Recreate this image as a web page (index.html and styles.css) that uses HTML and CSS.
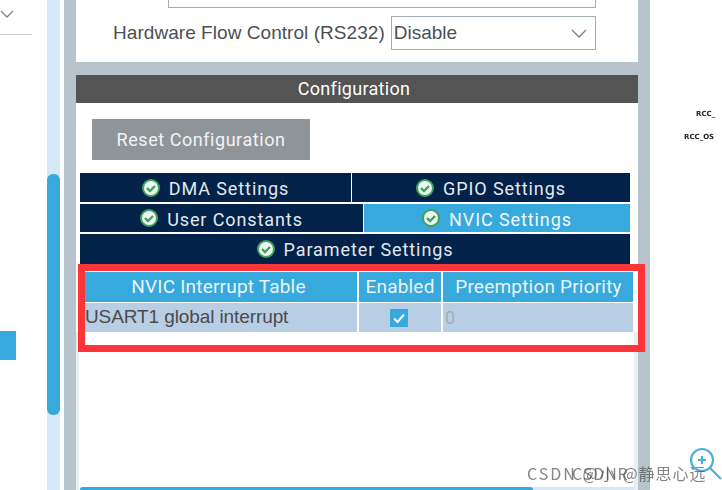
FILE: index.html
```html
<!DOCTYPE html>
<html lang="en">
  <head>
    <meta charset="UTF-8" />
    <title>USART1 NVIC Settings</title>
    <link rel="stylesheet" href="styles.css">
  </head>
  <body>
    <div class="app">
      <aside class="sidebar">
        <div class="side-select">
          <svg class="chevron" width="14" height="8" viewBox="0 0 14 8"><path d="M1 1l6 6 6-6" /></svg>
        </div>
        <div class="side-item"></div>
      </aside>
      <div class="scroll"><div class="scroll-thumb"></div></div>

      <main class="middle">
        <section class="panel-top">
          <div class="select-stub"></div>
          <div class="field">
            <label>Hardware Flow Control (RS232)</label>
            <div class="select">
              <span>Disable</span>
              <svg class="chevron" width="16" height="9" viewBox="0 0 16 9"><path d="M1 1l7 7 7-7" /></svg>
            </div>
          </div>
        </section>

        <section class="panel-config">
          <h2 class="config-title">Configuration</h2>
          <button class="reset">Reset Configuration</button>

          <div class="tabs">
            <div class="tab-row first">
              <div class="tab">
                <svg class="ok" viewBox="0 0 18 18"><circle cx="9" cy="9" r="8" /><path d="M5 9l3 3 5-5" /></svg>
                <span>DMA Settings</span>
              </div>
              <div class="tab">
                <svg class="ok" viewBox="0 0 18 18"><circle cx="9" cy="9" r="8" /><path d="M5 9l3 3 5-5" /></svg>
                <span>GPIO Settings</span>
              </div>
            </div>
            <div class="tab-row second">
              <div class="tab">
                <svg class="ok" viewBox="0 0 18 18"><circle cx="9" cy="9" r="8" /><path d="M5 9l3 3 5-5" /></svg>
                <span>User Constants</span>
              </div>
              <div class="tab active">
                <svg class="ok" viewBox="0 0 18 18"><circle cx="9" cy="9" r="8" /><path d="M5 9l3 3 5-5" /></svg>
                <span>NVIC Settings</span>
              </div>
            </div>
            <div class="tab-row third">
              <div class="tab">
                <svg class="ok" viewBox="0 0 18 18"><circle cx="9" cy="9" r="8" /><path d="M5 9l3 3 5-5" /></svg>
                <span>Parameter Settings</span>
              </div>
            </div>
          </div>

          <div class="nvic">
            <div class="nvic-head">
              <div class="col-name">NVIC Interrupt Table</div>
              <div class="col-enabled">Enabled</div>
              <div class="col-prio">Preemption Priority</div>
            </div>
            <div class="nvic-row">
              <div class="col-name cell-name">USART1 global interrupt</div>
              <div class="col-enabled cell-check">
                <svg width="18" height="18" viewBox="0 0 18 18"><rect width="18" height="18" fill="#38a9dc" /><path d="M4 9.5l3.5 3.5 6.5-7.5" /></svg>
              </div>
              <div class="col-prio cell-prio">0</div>
            </div>
          </div>

          <div class="filler">
            <div class="progress"><div class="progress-thumb"></div></div>
          </div>
          <div class="red-box"></div>
        </section>
      </main>

      <div class="canvas">
        <span class="pin pin-1">RCC_</span>
        <span class="pin pin-2">RCC_OS</span>
        <svg class="zoom-icon" width="36" height="36" viewBox="0 0 36 36">
          <circle cx="15" cy="14" r="11" />
          <path d="M23 22l11 11M15 10v8M11 14h8" />
        </svg>
      </div>
    </div>
    <div class="watermark">
      <span class="wm-a">CSDN @小R</span>
      <span class="wm-b">CSDN @静思心远</span>
    </div>
  </body>
</html>
```

FILE: styles.css
```css
* {
  box-sizing: border-box;
  margin: 0;
  padding: 0;
}
html,
body {
  width: 722px;
  height: 490px;
  overflow: hidden;
  background-color: #fff;
}
body {
  position: relative;
  font-family: "Liberation Sans", Arial, sans-serif;
}
.app {
  display: flex;
  height: 490px;
  filter: blur(0.4px);
}

/* left list */
.sidebar {
  width: 47px;
  flex: none;
}
.side-select {
  width: 32px;
  height: 35px;
  border-bottom: 1px solid #c9cfd3;
  padding-top: 10px;
}
.side-select .chevron {
  display: block;
}
.side-item {
  width: 16px;
  height: 29px;
  margin-top: 296px;
  background-color: #38a9dc;
}
.chevron path {
  fill: none;
  stroke: #77838a;
  stroke-width: 1.3;
}
.scroll {
  width: 13px;
  flex: none;
  background-color: #d6e8f6;
  padding-top: 174px;
}
.scroll-thumb {
  height: 241px;
  background-color: #38a9dc;
  border-radius: 6px;
}

/* middle column */
.middle {
  width: 586px;
  flex: none;
  margin-left: 4px;
  background-color: #b8c4cb;
  padding: 0 12px;
}
.panel-top {
  height: 62px;
  background-color: #fff;
  padding: 0 42px 0 37px;
}
.select-stub {
  height: 8px;
  margin-left: 55px;
  border: 1px solid #a3aeb4;
  border-top: none;
}
.field {
  display: flex;
  align-items: center;
  gap: 6px;
  margin-top: 8px;
}
.field label {
  font-size: 19px;
  letter-spacing: 0.05px;
  color: #4c4f55;
  white-space: nowrap;
}
.select {
  flex: 1;
  height: 34px;
  border: 1px solid #a3aeb4;
  display: flex;
  align-items: center;
  justify-content: space-between;
  padding: 0 8px 0 2px;
  font-size: 19px;
  color: #4c4f55;
}
.panel-config {
  position: relative;
  display: flex;
  flex-direction: column;
  height: 415px;
  margin-top: 13px;
  background-color: #fff;
}
.config-title {
  height: 28px;
  line-height: 28px;
  background-color: #535453;
  color: #fff;
  font-family: Roboto, sans-serif;
  font-size: 18px;
  font-weight: 400;
  letter-spacing: 0.3px;
  text-align: center;
  padding-right: 6px;
}
.reset {
  display: block;
  width: 218px;
  height: 41px;
  margin: 16px 0 0 16px;
  border: none;
  background-color: #8f9498;
  color: #f2f3f4;
  font-family: Roboto, sans-serif;
  font-size: 18px;
  letter-spacing: 0.55px;
}

/* tab strip */
.tabs {
  display: flex;
  flex-direction: column;
  gap: 2px;
  margin: 13px 8px 0 4px;
}
.tab-row {
  display: flex;
  gap: 1px;
  height: 29px;
}
.tab-row.second {
  height: 28px;
}
.tab-row.third {
  height: 30px;
}
.first .tab:first-child {
  width: 271px;
  flex: none;
}
.second .tab:first-child {
  width: 283px;
  flex: none;
}
.tab {
  flex: 1;
  display: flex;
  align-items: center;
  justify-content: center;
  gap: 9px;
  background-color: #022249;
  color: #e3e8ee;
  font-family: Roboto, sans-serif;
  font-size: 18px;
  letter-spacing: 0.9px;
}
.tab span {
  padding-top: 2px;
}
.third .tab span {
  padding-top: 0;
}
.tab.active {
  background-color: #38a9dc;
  color: #f2f9fd;
}
.ok {
  width: 18px;
  height: 18px;
  flex: none;
}
.ok circle {
  fill: #eef7f0;
  stroke: #3da35d;
  stroke-width: 2;
}
.ok path {
  fill: none;
  stroke: #3da35d;
  stroke-width: 2.4;
}

/* interrupt table */
.nvic {
  margin: 8px 5px 0 9px;
  overflow: hidden;
}
.nvic-head,
.nvic-row {
  display: flex;
  gap: 2px;
}
.nvic-head {
  height: 30px;
  line-height: 30px;
  color: #e8f5fb;
  font-family: Roboto, sans-serif;
  font-size: 19px;
  text-align: center;
  letter-spacing: 0.2px;
}
.nvic-head > div {
  background-color: #38a9dc;
}
.nvic-head .col-name {
  padding-right: 5px;
}
.nvic-head .col-prio {
  padding-left: 1px;
}
.nvic-row {
  height: 29px;
  margin-top: 1px;
}
.nvic-row > div {
  background-color: #b8cee4;
}
.col-name {
  width: 272px;
}
.col-enabled {
  width: 82px;
}
.col-prio {
  flex: 1;
}
.cell-name {
  font-size: 19px;
  line-height: 27px;
  letter-spacing: -0.1px;
  color: #4d4b4c;
  white-space: nowrap;
}
.cell-check {
  display: flex;
  align-items: center;
  justify-content: center;
  padding-right: 3px;
}
.cell-check path {
  fill: none;
  stroke: #fff;
  stroke-width: 2;
}
.cell-prio {
  font-family: Roboto, sans-serif;
  font-size: 18px;
  line-height: 29px;
  color: #a8adb1;
  padding-left: 2px;
}
.filler {
  flex: 1;
  display: flex;
  align-items: flex-end;
  border-left: 3px solid #e9eff3;
  border-right: 4px solid #e9eff3;
}
.progress {
  flex: 1;
  height: 3px;
  margin-left: 1px;
  background-color: #d6e8f6;
}
.progress-thumb {
  width: 453px;
  height: 3px;
  background-color: #38a9dc;
  border-radius: 3px 3px 0 0;
}

/* annotation drawn over the table */
.red-box {
  position: absolute;
  left: 2px;
  top: 189px;
  width: 567px;
  height: 88px;
  border: 7px solid #fb3538;
}

/* chip canvas */
.canvas {
  position: relative;
  flex: 1;
  overflow: hidden;
}
.pin {
  position: absolute;
  font-family: "DejaVu Sans", sans-serif;
  font-size: 7px;
  font-weight: 700;
  color: #222;
  white-space: nowrap;
}
.pin-1 {
  left: 46px;
  top: 110px;
}
.pin-2 {
  left: 34px;
  top: 133px;
}
.zoom-icon {
  position: absolute;
  left: 37px;
  top: 446px;
}
.zoom-icon circle,
.zoom-icon path {
  fill: none;
  stroke: #4bb0dd;
  stroke-width: 2.2;
}

/* two watermarks stamped on top of each other */
.watermark {
  position: absolute;
  left: 527px;
  top: 461px;
  width: 180px;
  height: 24px;
  font-family: "Noto Sans CJK SC", sans-serif;
  font-size: 16px;
  line-height: 24px;
  color: rgba(80, 80, 80, 0.7);
  white-space: nowrap;
}
.wm-a {
  position: absolute;
  left: 0;
  letter-spacing: 2px;
}
.wm-b {
  position: absolute;
  left: 45px;
  letter-spacing: 1px;
}
```
